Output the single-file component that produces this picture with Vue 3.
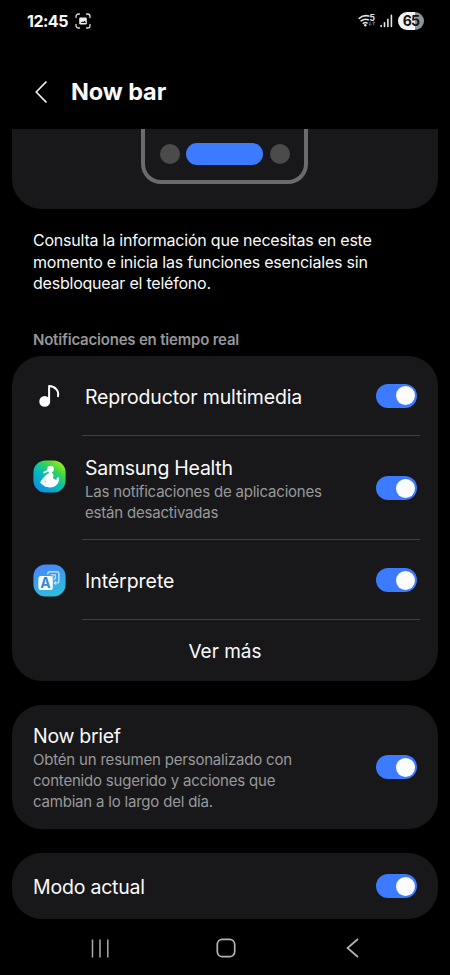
<script setup>
import { ref } from 'vue'

const items = ref([
  { id: 'media', title: 'Reproductor multimedia', on: true },
  { id: 'health', title: 'Samsung Health', lines: ['Las notificaciones de aplicaciones', 'están desactivadas'], on: true },
  { id: 'interpreter', title: 'Intérprete', on: true },
])
const extras = ref([
  { id: 'brief', title: 'Now brief', lines: ['Obtén un resumen personalizado con', 'contenido sugerido y acciones que', 'cambian a lo largo del día.'], on: true },
  { id: 'mode', title: 'Modo actual', on: true },
])
</script>

<template>
  <div class="screen">
    <header class="status">
      <span class="clock">12:45</span>
      <svg class="shot" width="16" height="16" viewBox="0 0 16 16" fill="none" stroke="#ddd" stroke-width="1.3" stroke-linecap="round">
        <path d="M1 4.5V3.6A2.6 2.6 0 0 1 3.6 1h.9M11.5 1h.9A2.6 2.6 0 0 1 15 3.6v.9M15 11.5v.9a2.6 2.6 0 0 1-2.6 2.6h-.9M4.5 15h-.9A2.6 2.6 0 0 1 1 12.4v-.9" />
        <rect x="4.2" y="4.5" width="7.6" height="7" rx="1.2" fill="#eee" stroke="none" />
        <path d="M5.6 9.9l1.5-1.5 1 .8 1.4-1.5 1.2 1.2v1z" fill="#111" stroke="none" />
      </svg>
      <svg class="wifi" width="19" height="16" viewBox="0 0 19 16" fill="none">
        <g stroke="#e4e4e4" stroke-width="1.6" stroke-linecap="round">
          <path d="M1.2 5.3Q5.6 1.6 10.8 3.1M3.2 7.9Q6.5 5.2 10.2 6.8M5.3 10.3Q7.3 8.9 9 10" />
        </g>
        <circle cx="7.3" cy="12.2" r="1.3" fill="#e4e4e4" />
        <text x="11.6" y="7.8" class="wifi-gen">5</text>
        <path d="M12 8.8v3.4m-1.4-1.2 1.4 1.4 1.4-1.4M15.7 12.4V9m-1.4 1.2 1.4-1.4 1.4 1.4" stroke="#707070" stroke-width="1" />
      </svg>
      <svg class="signal" width="13" height="14" viewBox="0 0 13 14" stroke="#e4e4e4" stroke-width="1.6" stroke-linecap="round">
        <path d="M1.1 11.5v1M4.5 8.8v3.7M7.9 5.2v7.3M11.4 1.4v11.1" />
      </svg>
      <span class="battery">65</span>
    </header>

    <div class="title-bar">
      <svg width="12" height="22" viewBox="0 0 12 22" fill="none" stroke="#f4f4f4" stroke-width="1.7" stroke-linecap="round" stroke-linejoin="round">
        <path d="M11 1 1.2 11 11 21" />
      </svg>
      <h1>Now bar</h1>
    </div>

    <section class="preview">
      <div class="phone">
        <i class="dot"></i><i class="pill"></i><i class="dot"></i>
      </div>
    </section>

    <p class="intro">
      <span>Consulta la información que necesitas en este</span>
      <span>momento e inicia las funciones esenciales sin</span>
      <span>desbloquear el teléfono.</span>
    </p>

    <h2>Notificaciones en tiempo real</h2>

    <section class="card list">
      <div v-for="item in items" :key="item.id" class="row" :class="item.id">
        <div class="icon">
          <svg v-if="item.id === 'media'" width="21" height="22" viewBox="0 0 21 22">
            <circle cx="5.7" cy="16.4" r="5.4" fill="#fff" />
            <path d="M10.1 16.5V1.1C15.7 1.3 20.2 5.2 19 11.2" fill="none" stroke="#fff" stroke-width="2" stroke-linecap="round" stroke-linejoin="round" />
          </svg>
          <svg v-else-if="item.id === 'health'" width="33" height="33" viewBox="0 0 33 33">
            <defs>
              <linearGradient id="health" x1="0.15" y1="0.95" x2="0.85" y2="0.05">
                <stop offset="0" stop-color="#0a8df0" />
                <stop offset="0.48" stop-color="#0bbfae" />
                <stop offset="0.72" stop-color="#36d252" />
                <stop offset="1" stop-color="#9aee10" />
              </linearGradient>
            </defs>
            <rect x=".4" y=".4" width="32.2" height="32.2" rx="12" fill="url(#health)" />
            <circle cx="17.6" cy="9.1" r="3.3" fill="#fff" />
            <path d="M15.2 10.2c-.8 1.200-2.300 1.300-4 2.300" fill="none" stroke="#fff" stroke-width="1.9" stroke-linecap="round" />
            <path d="M15.800 11.500h3.200v2h-3.200z" fill="#fff" />
            <path d="M14 14.200C15.800 13.800 16.800 12.600 18.800 12.900C21 13.400 20.600 16.400 19.900 18.300C21.300 18.700 22.300 20.300 23.300 19.700C24 19 23.400 18.300 24.100 17.500C25 16.700 26.300 17.400 26.200 18.700C26 22.600 23.800 25.700 20.300 27C17.500 27.800 13.600 27.500 12 26.600C10.400 25 7.700 24 7.200 22.400C8.800 19.400 10.700 16.700 14 14.200Z" fill="#fff" />
            <path d="M11.900 20.500c.7.600.9 1.300.6 2.100-.8-.6-1-1.300-.6-2.100Z" fill="#14a8d0" />
          </svg>
          <svg v-else width="33" height="33" viewBox="0 0 33 33">
            <defs>
              <linearGradient id="interp" x1="0.35" y1="0" x2="0.65" y2="1">
                <stop offset="0" stop-color="#4687fb" />
                <stop offset="1" stop-color="#2cc0da" />
              </linearGradient>
            </defs>
            <rect x=".4" y=".4" width="32.2" height="32.2" rx="12" fill="url(#interp)" />
            <path d="M14.8 10.4V9.3Q14.8 7.8 16.3 7.8H24.3Q25.9 7.800 25.9 9.4V17.600Q25.9 19 24.5 19H22" fill="none" stroke="#d5ecff" stroke-width="1.2" />
            <path d="M23.3 17.3 21.3 19 23.3 20.7" fill="none" stroke="#d5ecff" stroke-width="1.1" />
            <path d="M17.5 10.7h5v4.6M19.2 12.7l2-1.5M21.2 13.6v3" fill="none" stroke="#b9dcff" stroke-width="1.1" />
            <rect x="5.4" y="12.1" width="14.4" height="14" rx="2.7" fill="#fff" />
            <text x="12.6" y="24.3" text-anchor="middle" class="letter">A</text>
          </svg>
        </div>
        <div class="text">
          <div class="name">{{ item.title }}</div>
          <div v-for="line in item.lines" :key="line" class="sub">{{ line }}</div>
        </div>
        <button class="switch" :class="{ on: item.on }" :aria-pressed="item.on" @click="item.on = !item.on"></button>
      </div>
      <div class="more">Ver más</div>
    </section>

    <section v-for="item in extras" :key="item.id" class="card row single" :class="item.id">
      <div class="text">
        <div class="name">{{ item.title }}</div>
        <div v-for="line in item.lines" :key="line" class="sub">{{ line }}</div>
      </div>
      <button class="switch" :class="{ on: item.on }" :aria-pressed="item.on" @click="item.on = !item.on"></button>
    </section>

    <nav>
      <svg width="19" height="19" viewBox="0 0 19 19" stroke="#aaa" stroke-width="1.5"><path d="M1.5.5v18M9 .5v18M16.8.5v18" /></svg>
      <svg width="20" height="20" viewBox="0 0 20 20" fill="none" stroke="#b4b4b4" stroke-width="1.7"><rect x="1.3" y="1.3" width="17.4" height="17.4" rx="5" /></svg>
      <svg width="13" height="20" viewBox="0 0 13 20" fill="none" stroke="#b4b4b4" stroke-width="1.7"><path d="M12 1 1.5 10 12 19" /></svg>
    </nav>
  </div>
</template>

<style>
body { background: #000; }
</style>

<style scoped>
.screen {
  box-sizing: border-box;
  width: 450px;
  height: 975px;
  overflow: hidden;
  display: flex;
  flex-direction: column;
  background: #000;
  color: #fafafa;
  font-family: Inter, "Noto Sans", sans-serif;
}
.screen > * { flex-shrink: 0; }
.status {
  box-sizing: border-box;
  height: 41px;
  padding: 0 26px 0 27px;
  display: flex;
  align-items: center;
}
.clock { font-size: 16px; font-weight: 700; letter-spacing: -0.5px; width: 48px; white-space: nowrap; }
.wifi { margin-left: auto; }
.wifi-gen { font-size: 8.5px; font-weight: 700; fill: #e4e4e4; }
.signal { margin: 0 5px 0 3px; }
.battery {
  width: 26px;
  height: 18px;
  border-radius: 9px;
  background: linear-gradient(90deg, #f2f2f2 65%, #929292 65%);
  color: #111;
  font-size: 14px;
  font-weight: 700;
  letter-spacing: -0.7px;
  line-height: 18px;
  text-align: center;
}
.title-bar {
  box-sizing: border-box;
  height: 88px;
  padding: 14px 0 0 35px;
  display: flex;
  align-items: center;
  gap: 24px;
}
h1 { margin: 0; font-size: 23.5px; line-height: 30px; font-weight: 700; letter-spacing: -0.1px; }
.preview {
  height: 80px;
  margin: 0 12px;
  border-radius: 0 0 30px 30px;
  background: #18181a;
  display: flex;
  justify-content: center;
  align-items: flex-start;
}
.phone {
  box-sizing: border-box;
  width: 167px;
  height: 55px;
  margin-right: 1px;
  padding-bottom: 1px;
  border: 4.5px solid #6b6b6b;
  border-top: 0;
  border-radius: 0 0 20px 20px;
  display: flex;
  justify-content: center;
  align-items: center;
  gap: 6.5px;
}
.dot { width: 20px; height: 20px; border-radius: 50%; background: #4b4b4b; }
.pill { width: 77px; height: 22px; border-radius: 11px; background: #3c7bff; }
.intro { margin: 21px 33px 0; font-size: 16px; line-height: 21.7px; letter-spacing: -0.22px; }
.intro span { display: table; white-space: nowrap; }
h2 {
  margin: 35px 33px 0;
  font-size: 15px;
  line-height: 20px;
  font-weight: 600;
  letter-spacing: -0.2px;
  color: #969698;
}
.card { margin: 0 12px; background: #18181a; border-radius: 30px; }
.list { height: 325px; margin-top: 6px; }
.row { display: flex; align-items: center; box-sizing: border-box; position: relative; }
.list .row { padding: 0 21px 0 0; }
.list .row::after {
  content: "";
  position: absolute;
  left: 70px;
  right: 18px;
  bottom: 0;
  height: 1px;
  background: #3c3c3e;
}
.media { height: 80px; }
.health { height: 104px; }
.interpreter { height: 80px; }
.icon { width: 73px; display: flex; padding-left: 21px; box-sizing: border-box; }
.media .icon { padding-left: 27px; }
.health .icon { align-self: flex-start; padding-top: 23.5px; }
.text { flex: 1; padding-top: 2px; white-space: nowrap; }
.media .text { padding-top: 1px; }
.media .switch { margin-bottom: 1px; }
.name { display: table; font-size: 19.5px; line-height: 28px; letter-spacing: -0.15px; }
.health .name { letter-spacing: -0.25px; }
.interpreter .name { letter-spacing: -0.05px; }
.single .name { letter-spacing: -0.3px; }
.sub { display: table; font-size: 15px; line-height: 20.8px; letter-spacing: -0.2px; color: #98989a; }
.switch {
  width: 41px;
  height: 24px;
  padding: 0 2px;
  border: 0;
  border-radius: 12px;
  background: #55555a;
  display: flex;
  align-items: center;
}
.switch::before { content: ""; width: 19px; height: 19px; border-radius: 50%; background: #fcfcff; }
.switch.on { background: #3c7bff; justify-content: flex-end; }
.more { height: 61px; line-height: 64px; text-align: center; font-size: 19px; }
.single { padding: 0 21px; }
.brief { height: 124px; margin-top: 24px; }
.brief .text { padding-top: 1px; }
.mode { height: 66px; margin-top: 24px; }
.mode .name { letter-spacing: -0.2px; }
.letter { font-size: 14px; font-weight: 700; fill: #348bdc; }
nav {
  height: 56px;
  padding: 1px 91px 0 91px;
  display: flex;
  align-items: center;
  gap: 106px;
}
nav svg:nth-child(2) { margin-right: 4px; }
</style>
